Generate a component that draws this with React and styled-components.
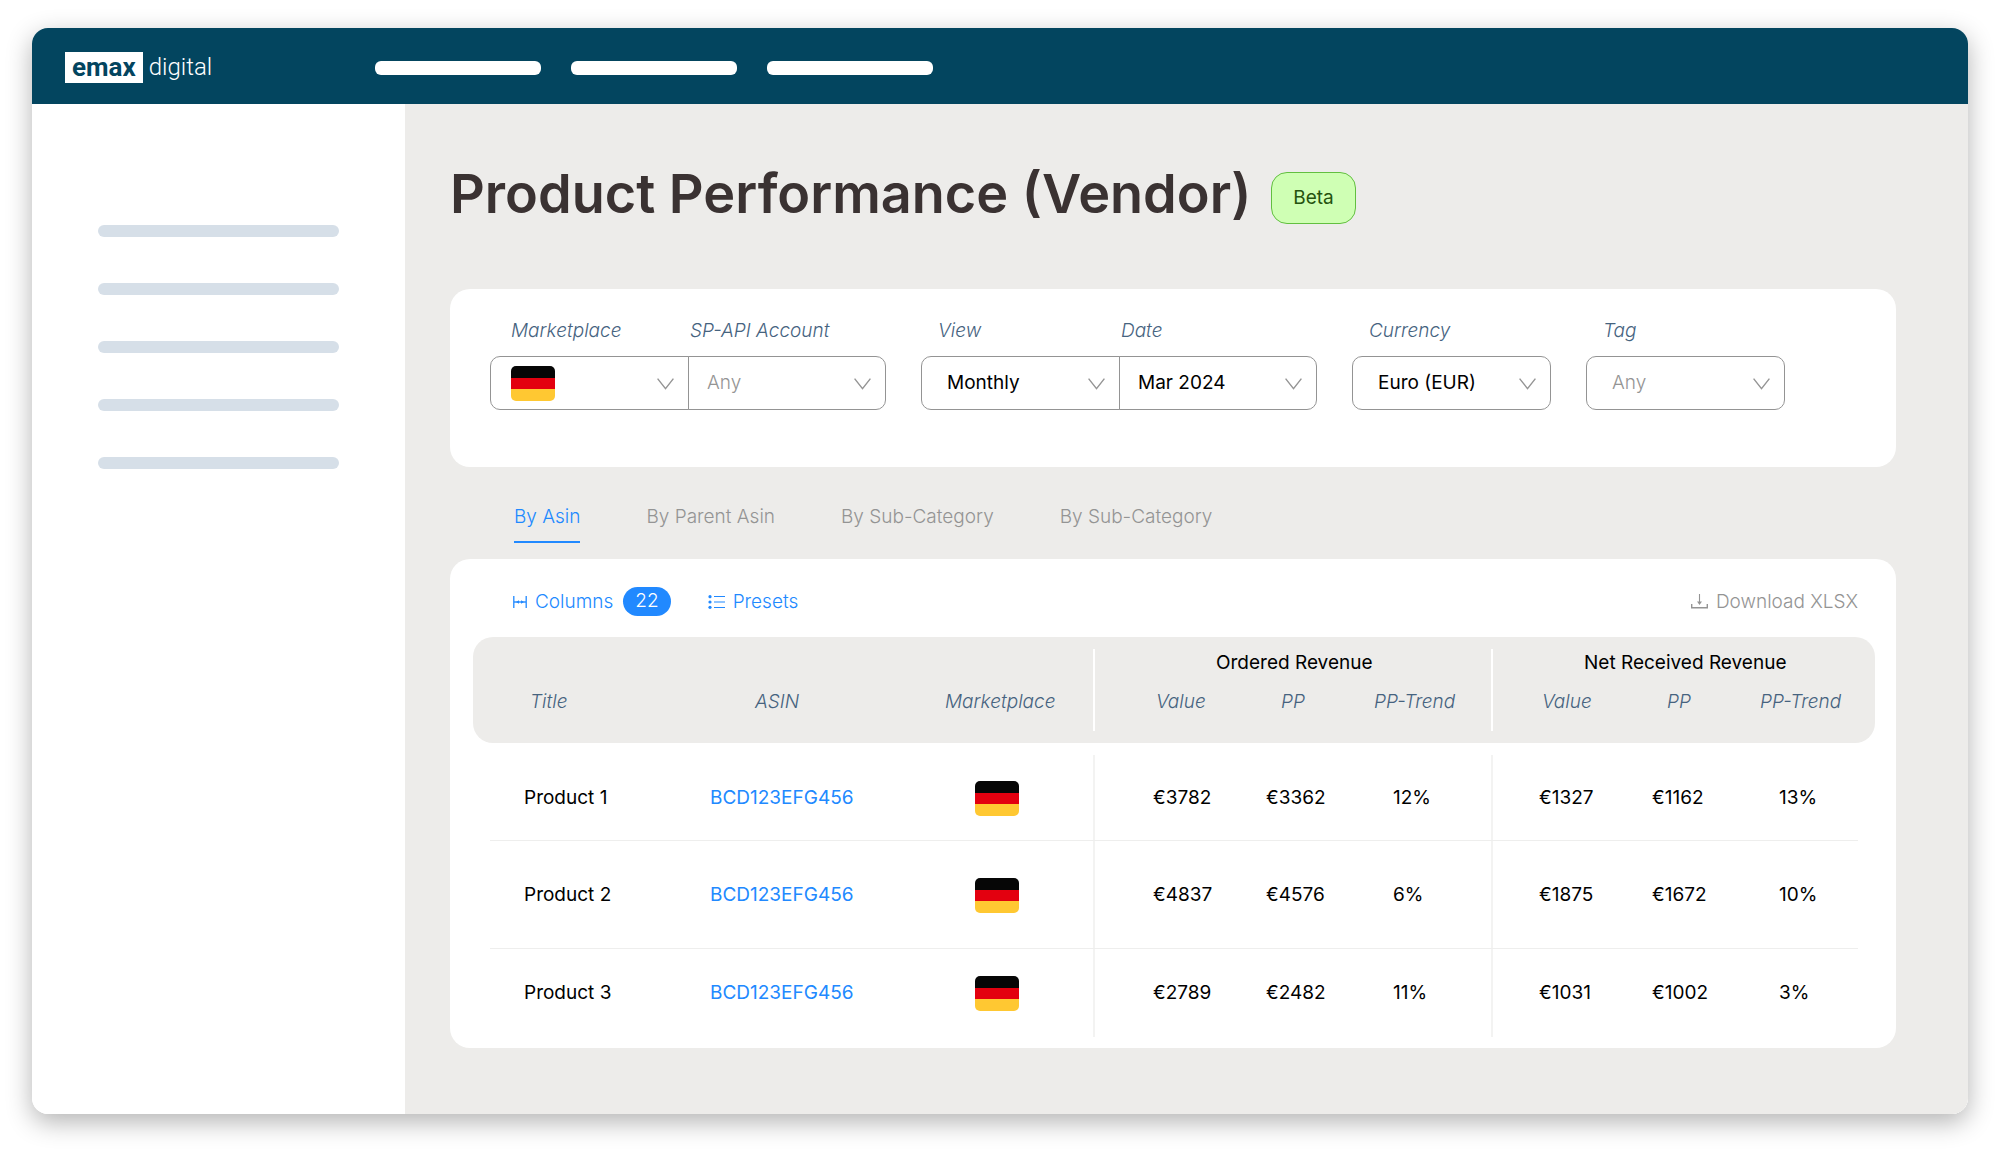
import React, { useState } from "react";
import styled, { createGlobalStyle, css } from "styled-components";

const color = {
  navy: "#03455f",
  canvas: "#edecea",
  ink: "#3a3232",
  label: "#46637f",
  blue: "#2189ff",
  grey: "#949494",
  line: "#eeeeed",
  divider: "#f3f3f2",
};

const GlobalStyle = createGlobalStyle`
  * { box-sizing: border-box; }
  body {
    margin: 0;
    background: #fff;
    color: #000;
    font: 400 19px/24px Inter, "Liberation Sans", sans-serif;
  }
  button, select { font: inherit; }
`;

const Page = styled.div`
  padding: 28px 32px 36px;
`;

const AppWindow = styled.div`
  display: flex;
  flex-direction: column;
  overflow: hidden;
  border-radius: 16px;
  background: #fff;
`;

const Shadow = styled.div`
  border-radius: 16px;
  box-shadow: 0 8px 26px rgba(0, 0, 0, 0.3);
`;

const TopBar = styled.header`
  display: flex;
  align-items: center;
  height: 76px;
  padding: 3px 0 0 33px;
  background: ${color.navy};
`;

const Logo = styled.a`
  display: flex;
  align-items: center;
  gap: 6px;
  width: 310px;
  color: #fff;
  text-decoration: none;
  font-family: Roboto, "Liberation Sans", sans-serif;
  font-size: 24px;
  font-weight: 300;
  line-height: 31px;
`;

const LogoMark = styled.span`
  padding: 0 7px;
  background: #fff;
  color: ${color.navy};
  font-size: 26px;
  font-weight: 700;
`;

const TopNav = styled.nav`
  display: flex;
  gap: 30px;
`;

const NavPlaceholder = styled.span`
  width: 166px;
  height: 14px;
  border-radius: 6px;
  background: #fff;
`;

const Body = styled.div`
  display: flex;
`;

const Sidebar = styled.aside`
  display: flex;
  flex: none;
  flex-direction: column;
  gap: 46px;
  width: 373px;
  padding: 121px 66px 0;
`;

const SidePlaceholder = styled.span`
  height: 12px;
  border-radius: 6px;
  background: #d6dfe8;
`;

const Main = styled.main`
  flex: 1;
  min-width: 0;
  padding: 60px 72px 66px 45px;
  background: ${color.canvas};
`;

const TitleRow = styled.div`
  display: flex;
  align-items: flex-end;
  gap: 20px;
  margin-bottom: 65px;
`;

const Title = styled.h1`
  margin: 0;
  color: ${color.ink};
  font-size: 54px;
  font-weight: 600;
  line-height: 60px;
`;

const Badge = styled.span`
  padding: 13px 21px;
  border: 1px solid #62bf40;
  border-radius: 16px;
  background: #cfffb4;
  color: #25520f;
`;

const Card = styled.section`
  border-radius: 20px;
  background: #fff;
`;

const Filters = styled(Card)`
  display: flex;
  flex-wrap: wrap;
  gap: 35px;
  padding: 30px 40px 57px;
`;

const FieldGroup = styled.div`
  display: flex;
`;

const Field = styled.div`
  display: flex;
  flex-direction: column;
  gap: 13px;
  width: 199px;

  & + & {
    width: 198px;
    margin-left: -1px;
  }
`;

const FieldLabel = styled.label`
  padding-left: ${(p) => p.$indent}px;
  color: ${color.label};
  font-style: italic;
  font-weight: 300;
`;

const SelectBox = styled.div`
  position: relative;
`;

const Select = styled.select`
  display: block;
  width: 100%;
  height: 54px;
  padding: 0 40px 0 ${(p) => (p.$side === "right" ? 18 : 25)}px;
  border: 1px solid ${color.grey};
  border-radius: 10px;
  background: transparent;
  color: ${(p) => (p.$muted ? color.grey : "#000")};
  font-weight: ${(p) => (p.$muted ? 300 : 400)};
  appearance: none;
  ${(p) => p.$side === "left" && css`border-radius: 10px 0 0 10px;`}
  ${(p) => p.$side === "right" && css`border-radius: 0 10px 10px 0;`}
`;

const SelectArrow = styled.svg`
  position: absolute;
  top: 22px;
  right: 15px;
  width: 17px;
  height: 12px;
  pointer-events: none;
`;

const FlagSlot = styled.span`
  position: absolute;
  top: 10px;
  left: 21px;
  pointer-events: none;
`;

const FlagSvg = styled.svg`
  display: block;
  width: 44px;
  height: 35px;
  border-radius: 5px;
`;

const Tabs = styled.div`
  display: flex;
  flex-wrap: wrap;
  gap: 66px;
  padding: 38px 64px 16px;
`;

const Tab = styled.button`
  padding: 0 0 12px;
  border: 0;
  border-bottom: 2px solid ${(p) => (p.$active ? color.blue : "transparent")};
  background: none;
  color: ${(p) => (p.$active ? color.blue : color.grey)};
  font-weight: 300;
  cursor: pointer;
`;

const TableCard = styled(Card)`
  padding: 28px 21px 11px 23px;
`;

const Toolbar = styled.div`
  display: flex;
  align-items: center;
  gap: 37px;
  height: 29px;
  margin-bottom: 21px;
  padding: 0 17px 0 40px;
`;

const ToolButton = styled.button`
  display: flex;
  align-items: center;
  gap: 8px;
  margin-left: ${(p) => (p.$end ? "auto" : "0")};
  padding: 0;
  border: 0;
  background: none;
  color: ${(p) => (p.$end ? color.grey : color.blue)};
  font-weight: 300;
  cursor: pointer;
`;

const Count = styled.span`
  margin-left: 2px;
  padding: 2px 12px 3px;
  border-radius: 15px;
  background: ${color.blue};
  color: #fff;
`;

const Table = styled.table`
  width: 100%;
  border-spacing: 0;
  table-layout: fixed;
  text-align: left;
`;

const Col = styled.col`
  width: ${(p) => p.$width}px;
`;

const Head = styled.thead`
  &::after {
    content: "";
    display: table-row;
    height: 12px;
  }
`;

const HeadCell = styled.th`
  padding: 0 0 29px ${(p) => p.$inset}px;
  background: ${color.canvas};
  color: ${color.label};
  font-style: italic;
  font-weight: 300;
  vertical-align: bottom;
  white-space: nowrap;
  ${(p) => p.$divided && css`
    background: linear-gradient(#fff, #fff) left top / 2px calc(100% - 12px) no-repeat ${color.canvas};
  `}

  &[rowspan]:first-child {
    border-radius: 20px 0 0 20px;
  }

  tr + tr > &:last-child {
    border-radius: 0 0 20px 0;
  }
`;

const GroupCell = styled.th`
  padding: 14px 0 15px ${(p) => p.$inset}px;
  background: linear-gradient(#fff, #fff) left bottom / 2px calc(100% - 12px) no-repeat ${color.canvas};
  font-weight: 400;

  &:last-child {
    border-radius: 0 20px 0 0;
  }
`;

const Row = styled.tr`
  height: ${(p) => p.$height}px;
`;

const Cell = styled.td`
  padding: 0 0 0 ${(p) => p.$inset}px;
  font-weight: 400;
  white-space: nowrap;
  background-repeat: no-repeat;
  background-image:
    linear-gradient(${color.line}, ${color.line}),
    linear-gradient(${color.divider}, ${color.divider});
  background-position: bottom right, left top;
  background-size: 100% 1px, ${(p) => (p.$divided ? "2px" : "0")} 100%;

  &:first-child,
  &:last-child {
    background-size: calc(100% - 17px) 1px, 0 100%;
  }

  &:last-child {
    background-position: bottom left, left top;
  }

  tr:last-child > & {
    background-size: 0 1px, ${(p) => (p.$divided ? "2px" : "0")} 100%;
  }
`;

const AsinLink = styled.a`
  color: ${color.blue};
  text-decoration: none;
`;

function Flag() {
  return (
    <FlagSvg viewBox="0 0 44 35" role="img" aria-label="Germany">
      <rect width="44" height="12" fill="#060606" />
      <rect y="12" width="44" height="11" fill="#e3000f" />
      <rect y="23" width="44" height="12" fill="#ffc832" />
    </FlagSvg>
  );
}

function ColumnsIcon() {
  return (
    <svg width="14" height="12" viewBox="0 0 14 12" fill="none" stroke="currentColor" aria-hidden="true">
      <path d="M.8 0v12M13.2 0v12" strokeWidth="1.3" />
      <path d="M1 6h12" strokeWidth="1.4" />
      <path d="M6 4.2v3.6L3 6zM8 4.2v3.6L11 6z" fill="currentColor" stroke="none" />
    </svg>
  );
}

function PresetsIcon() {
  return (
    <svg width="17" height="14" viewBox="0 0 17 14" fill="none" stroke="currentColor" aria-hidden="true">
      <path d="M6 1.5h11M6 7h11M6 12.5h11" strokeWidth="1.2" />
      <g fill="currentColor" stroke="none">
        <circle cx="2" cy="1.7" r="1.6" />
        <circle cx="2" cy="7" r="1.6" />
        <circle cx="2" cy="12.3" r="1.6" />
      </g>
    </svg>
  );
}

function DownloadIcon() {
  return (
    <svg width="17" height="15" viewBox="0 0 17 15" fill="none" stroke="currentColor" aria-hidden="true">
      <path d="M.7 10v3.8h15.6V10" strokeWidth="1.4" />
      <path d="M8.5 0v9.5" strokeWidth="1.1" />
      <path d="M6 7.4h5L8.5 11z" fill="currentColor" stroke="none" />
    </svg>
  );
}

const filterGroups = [
  [
    { id: "marketplace", label: "Marketplace", indent: 21, flag: true, value: "" },
    { id: "account", label: "SP-API Account", indent: 2, value: "Any", muted: true },
  ],
  [
    { id: "view", label: "View", indent: 17, value: "Monthly" },
    { id: "date", label: "Date", indent: 2, value: "Mar 2024" },
  ],
  [{ id: "currency", label: "Currency", indent: 17, value: "Euro (EUR)" }],
  [{ id: "tag", label: "Tag", indent: 17, value: "Any", muted: true }],
];

function FilterField({ field, side }) {
  return (
    <Field>
      <FieldLabel htmlFor={field.id} $indent={field.indent}>{field.label}</FieldLabel>
      <SelectBox>
        <Select id={field.id} $side={side} $muted={field.muted}>
          {field.flag ? <option value="de" aria-label="Germany" /> : <option>{field.value}</option>}
        </Select>
        {field.flag && <FlagSlot><Flag /></FlagSlot>}
        <SelectArrow viewBox="0 0 17 12" fill="none" stroke={color.grey} strokeWidth="1.4" aria-hidden="true">
          <path d="M.6.6 8.5 10.6 16.4.6" />
        </SelectArrow>
      </SelectBox>
    </Field>
  );
}

const tabs = ["By Asin", "By Parent Asin", "By Sub-Category", "By Sub-Category"];

const columns = [
  { title: "Title", width: 217, head: 57, body: 51 },
  { title: "ASIN", width: 210, head: 65, body: 20 },
  { title: "Marketplace", width: 193, head: 45, body: 75 },
  { title: "Value", width: 146, head: 63, body: 60, divided: true },
  { title: "PP", width: 120, head: 42, body: 27 },
  { title: "PP-Trend", width: 132, head: 15, body: 34 },
  { title: "Value", width: 134, head: 51, body: 48, divided: true },
  { title: "PP", width: 114, head: 42, body: 27 },
  { title: "PP-Trend", width: 136, head: 21, body: 40 },
];

const products = [
  { name: "Product 1", asin: "BCD123EFG456", height: 86, values: ["€3782", "€3362", "12%", "€1327", "€1162", "13%"] },
  { name: "Product 2", asin: "BCD123EFG456", height: 108, values: ["€4837", "€4576", "6%", "€1875", "€1672", "10%"] },
  { name: "Product 3", asin: "BCD123EFG456", height: 88, values: ["€2789", "€2482", "11%", "€1031", "€1002", "3%"] },
];

function HeadColumn({ column, ...rest }) {
  return <HeadCell scope="col" $inset={column.head} $divided={column.divided} {...rest}>{column.title}</HeadCell>;
}

function ProductTable() {
  return (
    <Table>
      <colgroup>{columns.map((c, i) => <Col key={i} $width={c.width} />)}</colgroup>
      <Head>
        <tr>
          {columns.slice(0, 3).map((c) => <HeadColumn key={c.title} column={c} rowSpan={2} />)}
          <GroupCell colSpan={3} scope="colgroup" $inset={123}>Ordered Revenue</GroupCell>
          <GroupCell colSpan={3} scope="colgroup" $inset={93}>Net Received Revenue</GroupCell>
        </tr>
        <tr>{columns.slice(3).map((c, i) => <HeadColumn key={i} column={c} />)}</tr>
      </Head>
      <tbody>
        {products.map((p) => (
          <Row key={p.name} $height={p.height}>
            <Cell as="th" scope="row" $inset={columns[0].body}>{p.name}</Cell>
            <Cell $inset={columns[1].body}><AsinLink href="#asin">{p.asin}</AsinLink></Cell>
            <Cell $inset={columns[2].body}><Flag /></Cell>
            {p.values.map((v, i) => (
              <Cell key={i} $inset={columns[i + 3].body} $divided={columns[i + 3].divided}>{v}</Cell>
            ))}
          </Row>
        ))}
      </tbody>
    </Table>
  );
}

export default function App() {
  const [active, setActive] = useState(0);
  return (
    <>
      <GlobalStyle />
      <Page>
        <Shadow>
          <AppWindow>
            <TopBar>
              <Logo href="#home"><LogoMark>emax</LogoMark><span>digital</span></Logo>
              <TopNav>
                <NavPlaceholder />
                <NavPlaceholder />
                <NavPlaceholder />
              </TopNav>
            </TopBar>
            <Body>
              <Sidebar>
                {[0, 1, 2, 3, 4].map((i) => <SidePlaceholder key={i} />)}
              </Sidebar>
              <Main>
                <TitleRow>
                  <Title>Product Performance (Vendor)</Title>
                  <Badge>Beta</Badge>
                </TitleRow>
                <Filters>
                  {filterGroups.map((group, g) => (
                    <FieldGroup key={g}>
                      {group.map((field, i) => (
                        <FilterField
                          key={field.id}
                          field={field}
                          side={group.length > 1 ? (i === 0 ? "left" : "right") : undefined}
                        />
                      ))}
                    </FieldGroup>
                  ))}
                </Filters>
                <Tabs role="tablist">
                  {tabs.map((name, i) => (
                    <Tab key={i} type="button" role="tab" aria-selected={i === active} $active={i === active} onClick={() => setActive(i)}>
                      {name}
                    </Tab>
                  ))}
                </Tabs>
                <TableCard>
                  <Toolbar>
                    <ToolButton type="button"><ColumnsIcon />Columns<Count>22</Count></ToolButton>
                    <ToolButton type="button"><PresetsIcon />Presets</ToolButton>
                    <ToolButton type="button" $end><DownloadIcon />Download XLSX</ToolButton>
                  </Toolbar>
                  <ProductTable />
                </TableCard>
              </Main>
            </Body>
          </AppWindow>
        </Shadow>
      </Page>
    </>
  );
}
